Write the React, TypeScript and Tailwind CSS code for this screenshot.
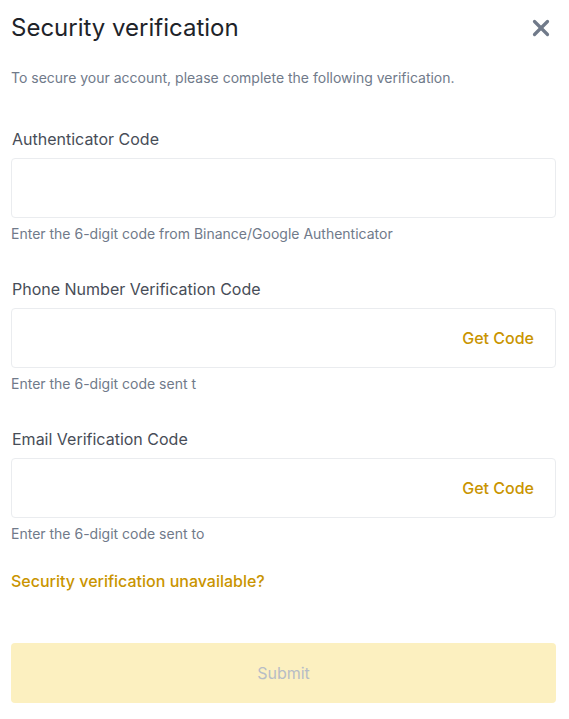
import { X } from 'lucide-react';

const font = { fontFamily: 'Inter, "Noto Sans", sans-serif' };

function Field({ label, hint, action }: { label: string; hint: string; action?: string }) {
  return (
    <div className="flex flex-col">
      <label className="text-[16px] leading-[24px] text-[#474D57] pl-[1px]">{label}</label>
      <div className="mt-[7px] h-[60px] rounded-[4px] border border-[#EAECEF] flex items-center justify-end pr-[21px]">
        {action && <span className="text-[16px] font-medium text-[#C99400]">{action}</span>}
      </div>
      <p className="mt-[5px] text-[14px] leading-[22px] text-[#707A8A]">{hint}</p>
    </div>
  );
}

export default function App() {
  return (
    <div className="w-[569px] h-[719px] bg-white pl-[11px] pr-[13px] pt-[12px]" style={font}>
      <div className="flex items-center justify-between">
        <h1 className="text-[24px] leading-[32px] text-[#1E2329]">Security verification</h1>
        <X className="w-[26px] h-[26px] mr-[2px] text-[#707A8A]" strokeWidth={3} />
      </div>
      <p className="mt-[23px] text-[14px] leading-[22px] text-[#707A8A]">
        To secure your account, please complete the following verification.
      </p>
      <div className="mt-[38px] flex flex-col gap-[32px]">
        <Field label="Authenticator Code" hint="Enter the 6-digit code from Binance/Google Authenticator" />
        <Field label="Phone Number Verification Code" hint="Enter the 6-digit code sent t" action="Get Code" />
        <Field label="Email Verification Code" hint="Enter the 6-digit code sent to" action="Get Code" />
      </div>
      <a className="block mt-[24px] text-[16px] leading-[24px] font-medium text-[#C99400]">
        Security verification unavailable?
      </a>
      <button className="mt-[50px] w-full h-[60px] rounded-[4px] bg-[#FCF0C0] text-[16px] text-[#B7BDC6]">
        Submit
      </button>
    </div>
  );
}
